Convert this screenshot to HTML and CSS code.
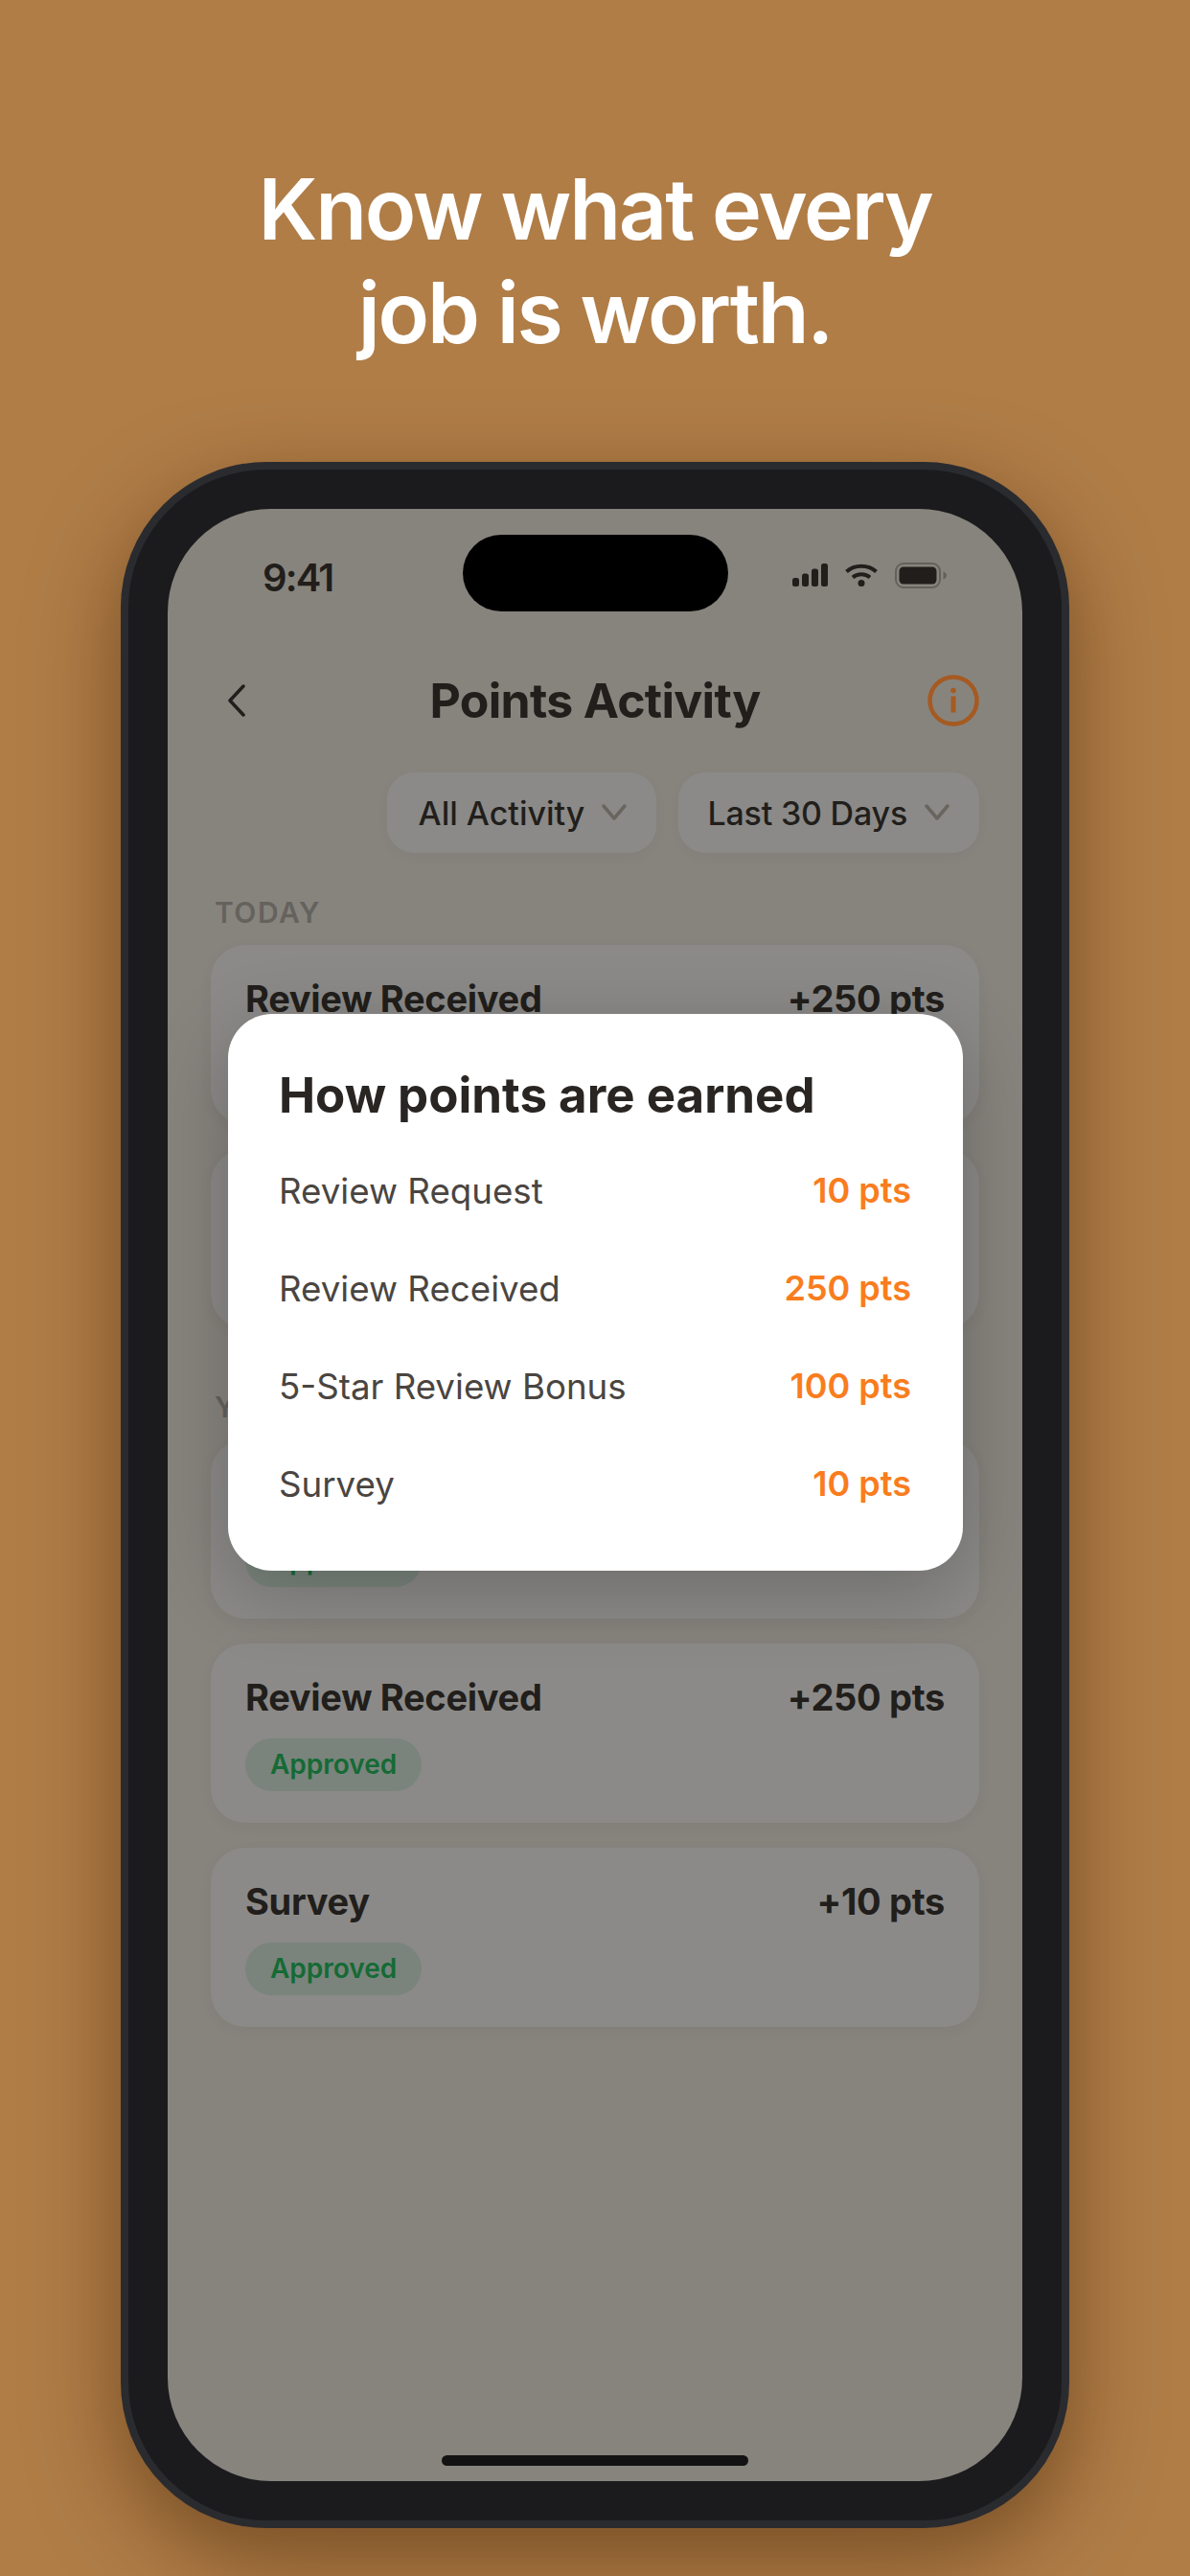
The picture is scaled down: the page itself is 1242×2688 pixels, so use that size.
FILE: index.html
```html
<!DOCTYPE html>
<html lang="en">
<head>
    <meta charset="UTF-8">
    <meta name="viewport" content="width=device-width, initial-scale=1.0">
    <title>Points Activity</title>
    <link rel="stylesheet" href="styles.css">
</head>
<body>

<h1 class="headline">Know what every<br>job is worth.</h1>

<div class="phone">
    <div class="screen">
        <div class="island"></div>

        <div class="status-bar">
            <span class="time">9:41</span>
            <div class="status-icons">
                <svg class="icon-signal" width="37" height="24" viewBox="0 0 37 24" fill="#211e1b">
                    <rect x="0" y="15" width="7" height="9" rx="2.5"/>
                    <rect x="10" y="10.5" width="7" height="13.5" rx="2.5"/>
                    <rect x="20" y="5.5" width="7" height="18.5" rx="2.5"/>
                    <rect x="30" y="0" width="7" height="24" rx="2.5"/>
                </svg>
                <svg class="icon-wifi" width="34" height="25" viewBox="0 0 34 25" fill="none" stroke="#211e1b" stroke-width="4">
                    <path d="M1.5 8.5 C10 0.8 24 0.8 32.5 8.5"/>
                    <path d="M8 14.5 C13 10.3 21 10.3 26 14.5"/>
                    <circle cx="17" cy="20.5" r="3.5" fill="#211e1b" stroke="none"/>
                </svg>
                <svg class="icon-battery" width="54" height="27" viewBox="0 0 54 27" fill="none">
                    <rect x="1" y="1" width="46" height="25" rx="8" stroke="#64615c" stroke-width="2"/>
                    <rect x="4.5" y="4.5" width="39" height="18" rx="4.5" fill="#211e1b"/>
                    <path d="M50.500 9.500 C53 10.500 54 12 54 13.500 C54 15 53 16.500 50.500 17.500 Z" fill="#64615c"/>
                </svg>
            </div>
        </div>

        <div class="nav-bar">
            <svg class="back" width="20" height="34" viewBox="0 0 20 34" fill="none" stroke="#211e1b" stroke-width="3.500" stroke-linecap="round" stroke-linejoin="round">
                <path d="M17 2 L3 17 L17 32"/>
            </svg>
            <span class="nav-title">Points Activity</span>
            <svg class="info" width="54" height="54" viewBox="0 0 54 54" fill="none">
                <circle cx="27" cy="27" r="24.500" stroke="#a55a22" stroke-width="4.500"/>
                <circle cx="27" cy="16.500" r="2.800" fill="#a55a22"/>
                <rect x="24.500" y="22.500" width="5" height="17" fill="#a55a22"/>
            </svg>
        </div>

        <div class="filters">
            <div class="filter">
                <span>All Activity</span>
                <svg width="26" height="18" viewBox="0 0 26 18" fill="none" stroke="#69655e" stroke-width="3.500" stroke-linecap="round" stroke-linejoin="round"><path d="M2 2 L13 15 L24 2"/></svg>
            </div>
            <div class="filter">
                <span>Last 30 Days</span>
                <svg width="26" height="18" viewBox="0 0 26 18" fill="none" stroke="#69655e" stroke-width="3.500" stroke-linecap="round" stroke-linejoin="round"><path d="M2 2 L13 15 L24 2"/></svg>
            </div>
        </div>

        <div class="section-label">TODAY</div>
        <div class="card">
            <div class="card-row"><span>Review Received</span><span>+250 pts</span></div>
        </div>
        <div class="card"></div>

        <div class="section-label yesterday">YESTERDAY</div>
        <div class="card">
            <div class="card-row"></div>
            <span class="badge">Approved</span>
        </div>
        <div class="card">
            <div class="card-row"><span>Review Received</span><span>+250 pts</span></div>
            <span class="badge">Approved</span>
        </div>
        <div class="card">
            <div class="card-row"><span>Survey</span><span>+10 pts</span></div>
            <span class="badge">Approved</span>
        </div>

        <div class="home-bar"></div>

        <div class="modal">
            <h2>How points are earned</h2>
            <div class="modal-row"><span>Review Request</span><b>10 pts</b></div>
            <div class="modal-row"><span>Review Received</span><b>250 pts</b></div>
            <div class="modal-row"><span>5-Star Review Bonus</span><b>100 pts</b></div>
            <div class="modal-row"><span>Survey</span><b>10 pts</b></div>
        </div>
    </div>
</div>

</body>
</html>
```

FILE: styles.css
```css
body {
    margin: 0;
    width: 1242px;
    height: 2688px;
    overflow: hidden;
    background-color: #b07d47;
    font-family: Inter, "Liberation Sans", sans-serif;
}

.headline {
    margin: 0;
    padding-top: 164px;
    color: #fff;
    font-size: 88px;
    font-weight: 600;
    line-height: 108px;
    letter-spacing: -2.200px;
    text-align: center;
}

.phone {
    width: 892px;
    height: 2058px;
    margin: 102px 0 0 126px;
    padding: 41px;
    border: 8px solid #2a2b2f;
    border-radius: 152px;
    background-color: #1b1b1d;
    box-shadow: 0 30px 90px rgba(60, 30, 0, 0.5);
}

.screen {
    position: relative;
    box-sizing: border-box;
    height: 2058px;
    padding: 0 45px;
    overflow: hidden;
    border-radius: 108px;
    background-color: #87847e;
    color: #211e1b;
}

.island {
    position: absolute;
    top: 27px;
    left: 308px;
    width: 277px;
    height: 80px;
    border-radius: 40px;
    background-color: #000;
}

.status-bar {
    display: flex;
    justify-content: space-between;
    align-items: center;
    height: 50px;
    padding: 45px 34px 0 54px;
}

.time {
    padding-top: 3px;
    font-size: 40px;
    font-weight: 600;
    letter-spacing: -1.800px;
}

.status-icons {
    display: flex;
    align-items: center;
    gap: 18px;
    padding-bottom: 2px;
}

.nav-bar {
    display: grid;
    grid-template-columns: 1fr auto 1fr;
    align-items: center;
    height: 56px;
    margin-top: 75px;
}

.back {
    margin-left: 17px;
}

.nav-title {
    font-size: 50px;
    font-weight: 700;
    letter-spacing: -0.700px;
}

.info {
    justify-self: end;
}

.filters {
    display: flex;
    justify-content: flex-end;
    gap: 23px;
    margin-top: 49px;
}

.filter {
    display: flex;
    align-items: center;
    gap: 18px;
    height: 84px;
    padding: 0 31px 0 33px;
    border-radius: 28px;
    background-color: #8b8a88;
    box-shadow: 0 4px 14px rgba(0, 0, 0, 0.03);
    font-size: 34px;
    font-weight: 500;
}

.filter:last-child {
    padding-left: 30px;
    letter-spacing: -0.200px;
}

.section-label {
    margin: 44px 0 16px 4px;
    color: #65625d;
    font-size: 30px;
    font-weight: 600;
    line-height: 36px;
    letter-spacing: 1.500px;
}

.section-label.yesterday {
    margin-top: 64px;
}

.card {
    box-sizing: border-box;
    height: 187px;
    margin-bottom: 26px;
    padding: 33px 36px 0;
    border-radius: 36px;
    background-color: #8b8a88;
    box-shadow: 0 4px 16px rgba(0, 0, 0, 0.04);
}

.card-row {
    display: flex;
    justify-content: space-between;
    min-height: 46px;
    font-size: 38px;
    font-weight: 700;
    line-height: 46px;
    letter-spacing: -0.300px;
}

.badge {
    display: inline-block;
    margin-top: 20px;
    padding: 0 26px;
    border-radius: 28px;
    background-color: #7a847c;
    color: #156a35;
    font-size: 28px;
    font-weight: 600;
    line-height: 55px;
}

.home-bar {
    position: absolute;
    bottom: 16px;
    left: 286px;
    width: 320px;
    height: 11px;
    border-radius: 6px;
    background-color: #131313;
}

.modal {
    position: absolute;
    top: 527px;
    left: 63px;
    box-sizing: border-box;
    width: 767px;
    height: 581px;
    padding: 55px 54px 0 53px;
    border-radius: 46px;
    background-color: #fff;
    box-shadow: 0 20px 80px rgba(0, 0, 0, 0.22);
}

.modal h2 {
    margin: 0 0 18px;
    color: #292522;
    font-size: 51px;
    font-weight: 700;
    line-height: 60px;
}

.modal-row {
    display: flex;
    justify-content: space-between;
    align-items: center;
    height: 102px;
    color: #4a4541;
    font-size: 36.700px;
}

.modal-row b {
    color: #f97d1e;
    font-size: 36px;
    font-weight: 600;
}
```
